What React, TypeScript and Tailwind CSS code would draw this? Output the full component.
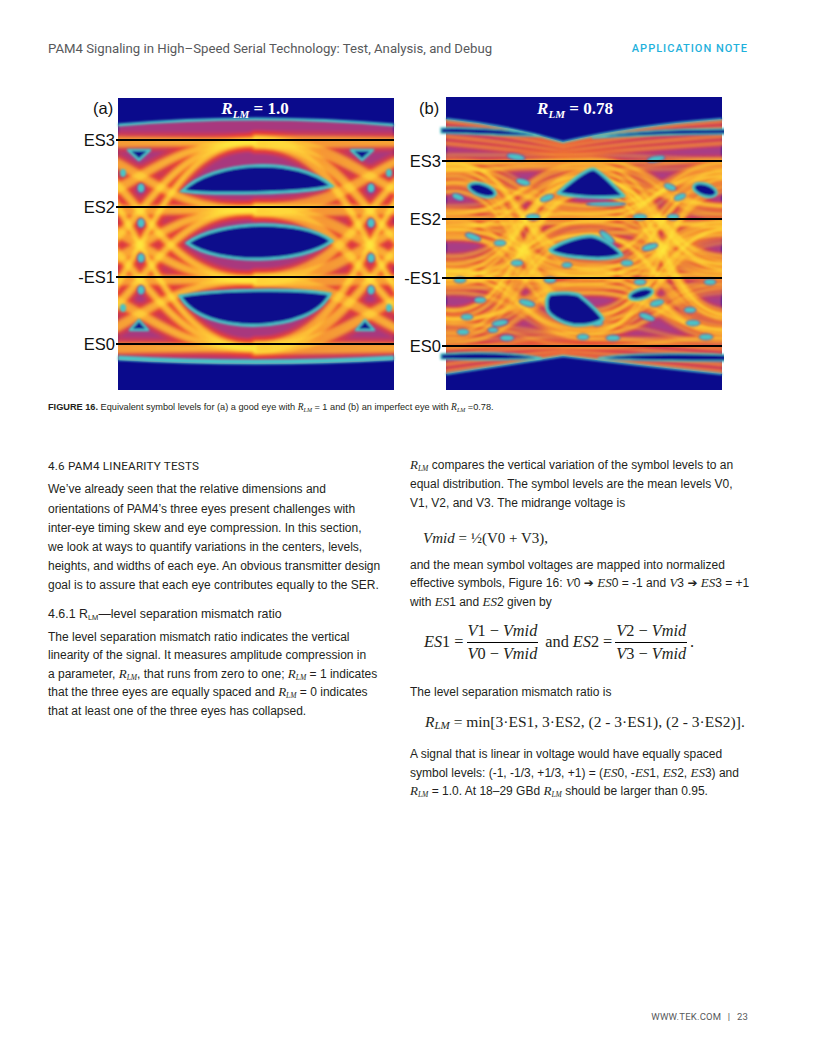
import React from "react";

type Pt = [number, number];

function sPath(pts: Pt[], k = 0.5): string {
  let d = `M${pts[0][0].toFixed(1)},${pts[0][1].toFixed(1)}`;
  for (let i = 1; i < pts.length; i++) {
    const [x0, y0] = pts[i - 1];
    const [x1, y1] = pts[i];
    const dx = (x1 - x0) * k;
    d += ` C${(x0 + dx).toFixed(1)},${y0.toFixed(1)} ${(x1 - dx).toFixed(1)},${y1.toFixed(1)} ${x1.toFixed(1)},${y1.toFixed(1)}`;
  }
  return d;
}

function rng(seed: number) {
  let s = seed >>> 0;
  return () => {
    s = (Math.imul(s, 1664525) + 1013904223) >>> 0;
    return s / 4294967296;
  };
}

const NAVY = "#0a0a8c";
const CYAN = "#48c4c6";

function Traces({
  paths,
  w,
  o,
}: {
  paths: string[];
  w: [number, number, number];
  o: [number, number, number];
}) {
  return (
    <g fill="none" strokeLinecap="round">
      {paths.map((d, i) => (
        <path key={"r" + i} d={d} stroke="#e83a36" strokeWidth={w[0]} strokeOpacity={o[0]} />
      ))}
      {paths.map((d, i) => (
        <path key={"o" + i} d={d} stroke="#ff8a24" strokeWidth={w[1]} strokeOpacity={o[1]} />
      ))}
      {paths.map((d, i) => (
        <path key={"y" + i} d={d} stroke="#ffec40" strokeWidth={w[2]} strokeOpacity={o[2]} />
      ))}
    </g>
  );
}

function EyeImageA() {
  const L = [250, 182, 112, 44];
  const paths: string[] = [];
  const offs = [-4, 0, 4];
  const spans: [number, number][] = [
    [-93, 137],
    [137, 367],
  ];
  for (const [xa, xb] of spans)
    for (let a = 0; a < 4; a++)
      for (let b = 0; b < 4; b++)
        for (const o of offs)
          paths.push(
            sPath([
              [xa, L[a] + o],
              [xb, L[b] + o * 0.5],
            ])
          );
  const dotsX = [23, 253];
  const dotsY = [90, 125, 160, 192];
  return (
    <g>
      <defs>
        <clipPath id="clipA">
          <path d="M0,27 Q138,15 276,27 L276,262 Q138,270 0,262 Z" />
        </clipPath>
        <filter id="blurA" x="-10%" y="-10%" width="120%" height="120%">
          <feGaussianBlur stdDeviation="1.8" />
        </filter>
        <filter id="blurA2" x="-20%" y="-20%" width="140%" height="140%">
          <feGaussianBlur stdDeviation="0.8" />
        </filter>
      </defs>
      <rect width="276" height="292" fill={NAVY} />
      <g clipPath="url(#clipA)">
        <g filter="url(#blurA)">
          <rect width="276" height="292" fill="#a8387e" />
          <Traces paths={paths} w={[15, 7, 2.8]} o={[0.42, 0.34, 0.45]} />
        </g>
      </g>
      <g filter="url(#blurA2)">
        <path d="M0,27 Q138,15 276,27" fill="none" stroke={CYAN} strokeWidth="3" />
        <path d="M0,260 Q138,268 276,260" fill="none" stroke={CYAN} strokeWidth="5" />
        <path
          d="M64,93 C95,62 180,58 214,88 C190,96 90,97 64,93 Z"
          fill={NAVY}
          stroke={CYAN}
          strokeWidth="3"
        />
        <path
          d="M69,145 C100,122 185,120 214,143 C185,166 100,168 69,145 Z"
          fill={NAVY}
          stroke={CYAN}
          strokeWidth="3"
        />
        <path
          d="M62,198 C100,191 180,190 212,196 C195,235 85,240 62,198 Z"
          fill={NAVY}
          stroke={CYAN}
          strokeWidth="3"
        />
        <path d="M10,52 L32,52 L21,62 Z" fill={NAVY} stroke={CYAN} strokeWidth="2.5" strokeLinejoin="round" />
        <path d="M233,52 L255,52 L244,62 Z" fill={NAVY} stroke={CYAN} strokeWidth="2.5" strokeLinejoin="round" />
        <path d="M12,232 L30,232 L21,222 Z" fill={NAVY} stroke={CYAN} strokeWidth="2.5" strokeLinejoin="round" />
        <path d="M238,232 L256,232 L247,222 Z" fill={NAVY} stroke={CYAN} strokeWidth="2.5" strokeLinejoin="round" />
        {dotsX.map((x) =>
          dotsY.map((y) => (
            <ellipse key={x + "-" + y} cx={x} cy={y} rx="3.5" ry="4.5" fill={CYAN} stroke="#7048a8" strokeWidth="1" />
          ))
        )}
        <ellipse cx="5" cy="75" rx="3" ry="4" fill={CYAN} />
        <ellipse cx="271" cy="75" rx="3" ry="4" fill={CYAN} />
        <ellipse cx="5" cy="210" rx="3" ry="4" fill={CYAN} />
        <ellipse cx="271" cy="210" rx="3" ry="4" fill={CYAN} />
      </g>
    </g>
  );
}

const ovalsB: [number, number, number, number, number][] = [
  [12, 100, 6, 3, 20],
  [77, 85, 7, 3, 15],
  [101, 101, 7, 3, -20],
  [160, 107, 20, 2, 0],
  [224, 90, 6, 3, 20],
  [234, 100, 6, 3, -20],
  [87, 120, 7, 3, 0],
  [194, 120, 7, 3, 0],
  [227, 120, 6, 3, 0],
  [27, 140, 8, 3, 20],
  [54, 146, 6, 3, 0],
  [161, 140, 9, 3, 40],
  [204, 150, 8, 3, -15],
  [71, 166, 6, 3, 0],
  [121, 168, 5, 2.5, 0],
  [181, 166, 6, 3, 0],
  [14, 183, 6, 3, 0],
  [104, 183, 6, 3, 0],
  [194, 185, 6, 3, 0],
  [264, 185, 6, 3, 0],
  [34, 203, 6, 3, 0],
  [81, 206, 8, 3, 15],
  [211, 206, 7, 3, -15],
  [244, 213, 6, 3, 0],
  [21, 220, 6, 3, 0],
  [54, 226, 8, 3, -10],
  [151, 226, 6, 3, 0],
  [201, 220, 8, 3, 20],
  [247, 226, 7, 3, 0],
  [17, 235, 6, 3, 0],
  [47, 233, 5, 2.5, 0],
  [61, 241, 7, 3, 0],
  [137, 240, 6, 3, 0],
  [167, 241, 7, 3, 0],
  [260, 240, 7, 3, 0],
  [70, 60, 9, 3, 10],
  [210, 62, 9, 3, -10],
];

function EyeImageB() {
  const Y = [250, 183, 121, 58];
  const xs = [-131, 7, 145, 283, 421];
  const r = rng(11);
  const paths: string[] = [];
  for (let t = 0; t < 150; t++) {
    const s = Array.from({ length: 7 }, () => Math.floor(r() * 4));
    const pts: Pt[] = xs.map((x, i) => {
      const n = i + 1;
      const y = Y[s[n]] + 0.12 * (Y[s[n - 1]] - Y[s[n]]) + 0.07 * (Y[s[n + 1]] - Y[s[n]]);
      return [x, y];
    });
    paths.push(sPath(pts));
  }
  const edge: string[] = [];
  for (const o of [2, 9, 17, 24]) {
    edge.push(`M-4,${22 + o} Q60,${28 + o} 117,${45 + o * 0.55} Q190,${28 + o} 280,${22 + o}`);
    edge.push(`M-4,${277 - o} Q60,${268 - o} 117,${259 - o * 0.55} Q190,${268 - o} 280,${277 - o}`);
  }
  const region = "M0,22 Q60,28 117,45 Q190,28 276,22 L276,277 Q190,268 117,259 Q60,268 0,277 Z";
  return (
    <g>
      <defs>
        <clipPath id="clipB">
          <path d={region} />
        </clipPath>
        <filter id="blurB" x="-10%" y="-10%" width="120%" height="120%">
          <feGaussianBlur stdDeviation="1.4" />
        </filter>
        <filter id="blurB2" x="-20%" y="-20%" width="140%" height="140%">
          <feGaussianBlur stdDeviation="0.9" />
        </filter>
      </defs>
      <rect width="276" height="293" fill={NAVY} />
      <g clipPath="url(#clipB)">
        <g filter="url(#blurB)">
          <rect width="276" height="293" fill="#a83c86" />
          <Traces paths={edge} w={[7, 3.5, 1.5]} o={[0.6, 0.45, 0.4]} />
          <Traces paths={paths} w={[9, 4.5, 1.8]} o={[0.24, 0.2, 0.3]} />
        </g>
      </g>
      <g filter="url(#blurB2)">
        <path d="M0,22 Q60,28 117,45 Q190,28 276,22" fill="none" stroke={CYAN} strokeWidth="2" />
        <path d="M0,277 Q60,268 117,259 Q190,268 276,277" fill="none" stroke={CYAN} strokeWidth="2" />
        <path d="M-5,31 C30,30 70,33 96,39 C70,39 30,37 -5,36 Z" fill={NAVY} stroke={CYAN} strokeWidth="1.5" />
        <path d="M146,41 C175,35 230,32 282,32 L282,37 C230,37 178,39 146,41 Z" fill={NAVY} stroke={CYAN} strokeWidth="1.5" />
        <path d="M-5,257 C30,255 70,256 96,261 C70,263 30,263 -5,262 Z" fill={NAVY} stroke={CYAN} strokeWidth="1.5" />
        <path d="M152,261 C180,257 230,256 282,258 L282,264 C230,264 180,264 152,261 Z" fill={NAVY} stroke={CYAN} strokeWidth="1.5" />
        {ovalsB.map(([x, y, rx, ry, rot], i) => (
          <ellipse
            key={i}
            cx={x}
            cy={y}
            rx={rx}
            ry={ry}
            transform={`rotate(${rot} ${x} ${y})`}
            fill={CYAN}
            stroke="#6848a8"
            strokeWidth="1"
          />
        ))}
        <ellipse cx="36" cy="93" rx="14" ry="6" transform="rotate(18 36 93)" fill={NAVY} stroke={CYAN} strokeWidth="2.5" />
        <ellipse cx="259" cy="93" rx="12" ry="6" transform="rotate(18 259 93)" fill={NAVY} stroke={CYAN} strokeWidth="2.5" />
        <ellipse cx="195" cy="197" rx="12" ry="5" transform="rotate(-15 195 197)" fill={NAVY} stroke={CYAN} strokeWidth="2.5" />
        <path
          d="M147,72 C153,72 170,91 178,99 C160,102 125,100 112,96 C120,88 140,72 147,72 Z"
          fill={NAVY}
          stroke={CYAN}
          strokeWidth="3"
          strokeLinejoin="round"
        />
        <path
          d="M146,139 C156,140 172,152 176,158 C165,162 150,162 140,161 C125,160 108,158 104,153 C112,146 135,138 146,139 Z"
          fill={NAVY}
          stroke={CYAN}
          strokeWidth="3"
          strokeLinejoin="round"
        />
        <path
          d="M104,197 C115,195 128,196 133,198 C143,206 153,215 157,222 C150,228 135,229 127,228 C115,226 102,218 101,212 C100,205 101,199 104,197 Z"
          fill={NAVY}
          stroke={CYAN}
          strokeWidth="3"
          strokeLinejoin="round"
        />
      </g>
    </g>
  );
}

function Figure({
  tag,
  title,
  titleX,
  imgX,
  imgY,
  lines,
  labelX,
  children,
}: {
  tag: string;
  title: string;
  titleX: number;
  imgX: number;
  imgY: number;
  lines: number[];
  labelX: number;
  children: React.ReactNode;
}) {
  const labels = ["ES3", "ES2", "-ES1", "ES0"];
  return (
    <svg width="324" height="296" viewBox="0 0 324 296" className="block shrink-0">
      <g transform={`translate(${imgX},${imgY})`}>{children}</g>
      {lines.map((y, i) => (
        <line key={i} x1={labelX} x2={322} y1={y} y2={y} stroke="#000" strokeWidth="2" />
      ))}
      {lines.map((y, i) => (
        <text
          key={"t" + i}
          x={labelX - 1}
          y={y + 6}
          textAnchor="end"
          fontFamily="'Liberation Sans', Arial, sans-serif"
          fontSize="16.5"
          fill="#111"
        >
          {labels[i]}
        </text>
      ))}
      <text x={labelX - 23} y={18} fontFamily="'Liberation Sans', Arial, sans-serif" fontSize="16.5" fill="#111">
        {tag}
      </text>
      <text
        x={titleX}
        y={18}
        textAnchor="middle"
        fontFamily="'Liberation Serif', 'Times New Roman', serif"
        fontWeight="bold"
        fontSize="17"
        fill="#fff"
      >
        <tspan fontStyle="italic">R</tspan>
        <tspan fontStyle="italic" fontSize="11" dy="4">
          LM
        </tspan>
        <tspan dy="-4">{" = " + title}</tspan>
      </text>
    </svg>
  );
}

const SERIF = "font-['Liberation_Serif','Times_New_Roman',serif]";

function RLM() {
  return (
    <span className="font-['Liberation_Serif','Times_New_Roman',serif] italic text-[13px]">
      R<sub className="text-[7.5px] italic">LM</sub>
    </span>
  );
}

function SI({ children }: { children: React.ReactNode }) {
  return <span className="font-['Liberation_Serif','Times_New_Roman',serif] italic text-[13px]">{children}</span>;
}

function Arrow() {
  return <span className="font-['DejaVu_Sans',sans-serif] text-[12px]">➔</span>;
}

function Frac({ num, den }: { num: React.ReactNode; den: React.ReactNode }) {
  return (
    <span className="inline-flex flex-col items-stretch text-center mx-[3px]">
      <span className="h-[22px] leading-[22px] px-[1px] whitespace-nowrap">{num}</span>
      <span className="h-px bg-black" />
      <span className="h-[22px] leading-[22px] px-[1px] whitespace-nowrap">{den}</span>
    </span>
  );
}

export default function App() {
  return (
    <div className="w-[816px] h-[1056px] bg-white flex flex-col text-[#231f20] font-['Liberation_Sans',Arial,sans-serif]">
      {/* header */}
      <div className="flex items-center justify-between pl-[48px] pr-[68px] pt-[41px] h-[57px]">
        <span className="font-['Roboto',sans-serif] text-[13.2px] text-[#58595b] whitespace-nowrap">
          PAM4 Signaling in High–Speed Serial Technology: Test, Analysis, and Debug
        </span>
        <span className="font-['Roboto',sans-serif] font-medium text-[11px] tracking-[1px] text-[#1fb1dc] whitespace-nowrap">
          APPLICATION NOTE
        </span>
      </div>

      {/* figures */}
      <div className="mt-[39px] flex pl-[72px] gap-[4px]">
        <Figure tag="(a)" title="1.0" titleX={183} imgX={46} imgY={2} lines={[44, 111, 181, 248]} labelX={44}>
          <EyeImageA />
        </Figure>
        <Figure tag="(b)" title="0.78" titleX={175} imgX={46} imgY={1} lines={[65, 123, 182, 250]} labelX={42}>
          <EyeImageB />
        </Figure>
      </div>

      {/* caption */}
      <div className="mt-[9px] pl-[48px] text-[9.2px] leading-[12px] whitespace-nowrap text-[#231f20]">
        <span className="font-bold">FIGURE 16.</span> Equivalent symbol levels for (a) a good eye with{" "}
        <span className={`${SERIF} italic text-[9.5px]`}>
          R<sub className="text-[6px]">LM</sub>
        </span>{" "}
        = 1 and (b) an imperfect eye with{" "}
        <span className={`${SERIF} italic text-[9.5px]`}>
          R<sub className="text-[6px]">LM</sub>
        </span>{" "}
        =0.78.
      </div>

      {/* columns */}
      <div className="mt-[42px] grid grid-cols-[337px_338px] gap-x-[25px] pl-[48px] items-start">
        {/* left */}
        <div className="text-[12px]">
          <div className="mt-[3px] h-[16px] leading-[16px] font-['Roboto',sans-serif] text-[11.7px] tracking-[0.2px] text-[#231f20] whitespace-nowrap">
            4.6 PAM4 LINEARITY TESTS
          </div>
          <p className="mt-[6.4px] leading-[19.2px] whitespace-nowrap">
            We’ve already seen that the relative dimensions and
            <br />
            orientations of PAM4’s three eyes present challenges with
            <br />
            inter-eye timing skew and eye compression. In this section,
            <br />
            we look at ways to quantify variations in the centers, levels,
            <br />
            heights, and widths of each eye. An obvious transmitter design
            <br />
            goal is to assure that each eye contributes equally to the SER.
          </p>
          <div className="mt-[9.4px] h-[18px] leading-[18px] text-[12.4px] whitespace-nowrap">
            4.6.1 R<sub className="text-[7.5px]">LM</sub>—level separation mismatch ratio
          </div>
          <p className="mt-[4.75px] leading-[18.5px] whitespace-nowrap">
            The level separation mismatch ratio indicates the vertical
            <br />
            linearity of the signal. It measures amplitude compression in
            <br />
            a parameter, <RLM />, that runs from zero to one; <RLM /> = 1 indicates
            <br />
            that the three eyes are equally spaced and <RLM /> = 0 indicates
            <br />
            that at least one of the three eyes has collapsed.
          </p>
        </div>

        {/* right */}
        <div className="text-[12px]">
          <p className="leading-[19px] whitespace-nowrap">
            <RLM /> compares the vertical variation of the symbol levels to an
            <br />
            equal distribution. The symbol levels are the mean levels V0,
            <br />
            V1, V2, and V3. The midrange voltage is
          </p>
          <div className={`mt-[13px] h-[24px] leading-[24px] pl-[13px] ${SERIF} text-[15px] whitespace-nowrap`}>
            <i>Vmid</i> = ½(V0 + V3),
          </div>
          <p className="mt-[5.5px] leading-[18.5px] whitespace-nowrap">
            and the mean symbol voltages are mapped into normalized
            <br />
            effective symbols, Figure 16: <SI>V</SI>0 <Arrow /> <SI>ES</SI>0 = -1 and <SI>V</SI>3 <Arrow />{" "}
            <SI>ES</SI>3 = +1
            <br />
            with <SI>ES</SI>1 and <SI>ES</SI>2 given by
          </p>
          <div className={`mt-[8.5px] flex items-center pl-[14px] ${SERIF} text-[16.3px] whitespace-nowrap`}>
            <span>
              <i>ES</i>1 =
            </span>
            <Frac
              num={
                <>
                  <i>V</i>1 − <i>Vmid</i>
                </>
              }
              den={
                <>
                  <i>V</i>0 − <i>Vmid</i>
                </>
              }
            />
            <span className="mx-[4px]">and</span>
            <span>
              <i>ES</i>2 =
            </span>
            <Frac
              num={
                <>
                  <i>V</i>2 − <i>Vmid</i>
                </>
              }
              den={
                <>
                  <i>V</i>3 − <i>Vmid</i>
                </>
              }
            />
            <span>.</span>
          </div>
          <p className="mt-[18.5px] leading-[19px] whitespace-nowrap">The level separation mismatch ratio is</p>
          <div className={`mt-[7.5px] h-[24px] leading-[24px] pl-[15px] ${SERIF} text-[15.5px] whitespace-nowrap`}>
            <i>
              R<sub className="text-[11px]">LM</sub>
            </i>{" "}
            = min[3·ES1, 3·ES2, (2 - 3·ES1), (2 - 3·ES2)].
          </div>
          <p className="mt-[11.75px] leading-[18.5px] whitespace-nowrap">
            A signal that is linear in voltage would have equally spaced
            <br />
            symbol levels: (-1, -1/3, +1/3, +1) = (<SI>ES</SI>0, -<SI>ES</SI>1, <SI>ES</SI>2, <SI>ES</SI>3) and
            <br />
            <RLM /> = 1.0. At 18–29 GBd <RLM /> should be larger than 0.95.
          </p>
        </div>
      </div>

      {/* footer */}
      <div className="mt-auto pb-[33px] pr-[68px] flex justify-end">
        <span className="font-['Roboto',sans-serif] text-[9.5px] leading-[12px] tracking-[0.2px] text-[#58595b] whitespace-nowrap">
          WWW.TEK.COM <span className="mx-[4px]">|</span> 23
        </span>
      </div>
    </div>
  );
}
